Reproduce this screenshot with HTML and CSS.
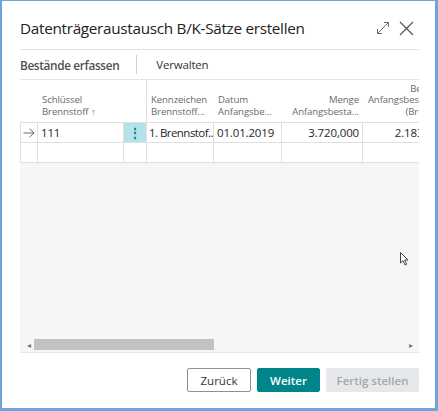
FILE: index.html
```html
<!DOCTYPE html>
<html lang="de">
<head>
<meta charset="utf-8">
<title>Datenträgeraustausch B/K-Sätze erstellen</title>
<link rel="stylesheet" href="styles.css">
</head>
<body>
<div class="frame">
  <div class="dialog">
    <header class="title-bar">
      <h1 class="title">Datenträgeraustausch B/K-Sätze erstellen</h1>
      <div class="title-icons">
        <svg class="icon" width="14" height="14" viewBox="0 0 14 14"><path d="M1.5 12.5 L12.5 1.5 M8 1.5 H12.5 V6 M1.5 8 V12.5 H6" fill="none" stroke="#6b6b6b" stroke-width="1"/></svg>
        <svg class="icon" width="15" height="15" viewBox="0 0 15 15"><path d="M1 1 L14 14 M14 1 L1 14" fill="none" stroke="#555" stroke-width="1.2"/></svg>
      </div>
    </header>
    <nav class="tabs">
      <span class="tab tab-active">Bestände erfassen</span>
      <span class="tab-sep"></span>
      <span class="tab">Verwalten</span>
    </nav>
    <div class="grid-wrap">
      <div class="grid">
        <div class="hcell"></div>
        <div class="hcell"><div>Schlüssel<br>Brennstoff <span class="sort">↑</span></div></div>
        <div class="hcell hcell-frozen"></div>
        <div class="hcell"><div>Kennzeichen<br>Brennstoff...</div></div>
        <div class="hcell"><div>Datum<br>Anfangsbe...</div></div>
        <div class="hcell right"><div>Menge<br>Anfangsbesta...</div></div>
        <div class="hcell right"><div>Betrag<br>Anfangsbestand<br>(Brutto)</div></div>

        <div class="cell arrow"><svg width="12" height="10" viewBox="0 0 12 10"><path d="M0.5 5 H11 M6.5 0.8 L11 5 L6.5 9.2" fill="none" stroke="#6a6a6a" stroke-width="1"/></svg></div>
        <div class="cell">111</div>
        <div class="cell dots">⋮</div>
        <div class="cell tight">1. Brennstof...</div>
        <div class="cell">01.01.2019</div>
        <div class="cell right">3.720,000</div>
        <div class="cell right">2.183,00</div>

        <div class="cell"></div>
        <div class="cell"></div>
        <div class="cell"></div>
        <div class="cell"></div>
        <div class="cell"></div>
        <div class="cell"></div>
        <div class="cell"></div>
      </div>
      <div class="grid-empty"></div>
      <div class="hscroll">
        <span class="sarrow">◂</span>
        <div class="track"><div class="thumb"></div></div>
        <span class="sarrow">▸</span>
      </div>
    </div>
    <footer class="actions">
      <button class="btn btn-secondary">Zurück</button>
      <button class="btn btn-primary">Weiter</button>
      <button class="btn btn-disabled">Fertig stellen</button>
    </footer>
    <svg class="cursor" width="10" height="14" viewBox="0 0 10 14"><path d="M0.5 0.5 V11 L3 8.6 L5 13 L6.6 12.3 L4.7 8 H8 Z" fill="#fff" stroke="#444" stroke-width="1"/></svg>
  </div>
</div>
</body>
</html>
```
FILE: styles.css
```css
* { box-sizing: border-box; }
html, body { margin: 0; padding: 0; }
body {
  width: 438px;
  height: 411px;
  font-family: "Open Sans", "Noto Sans", sans-serif;
  color: #212121;
  background: #fff;
}
.frame {
  width: 438px;
  height: 411px;
  border-style: solid;
  border-color: #6fa3dc;
  border-width: 1px 3px 3px 2px;
  background: #fff;
}
.dialog {
  position: relative;
  height: 100%;
  padding: 0 16px 0 18px;
  display: flex;
  flex-direction: column;
}
.title-bar {
  height: 49px;
  display: flex;
  align-items: center;
  justify-content: space-between;
  border-bottom: 1px solid #e3e3e3;
  padding-top: 6px;
}
.title {
  margin: 0;
  font-size: 15.3px;
  font-weight: 400;
  letter-spacing: -0.3px;
  color: #222;
}
.title-icons {
  display: flex;
  align-items: center;
  gap: 9px;
  margin-right: 5px;
}
.icon { display: block; }
.tabs {
  height: 30px;
  display: flex;
  align-items: center;
  border-bottom: 1px solid #e3e3e3;
}
.tab {
  font-size: 11.5px;
  color: #333;
  letter-spacing: -0.2px;
}
.tab-active {
  font-size: 11.8px;
  font-weight: 600;
  color: #505050;
  letter-spacing: -0.35px;
}
.tab-sep {
  width: 1px;
  height: 19px;
  background: #d0d0d0;
  margin: 0 19px 0 17px;
}
.grid-wrap {
  width: 399px;
  overflow: hidden;
  background: #f5f6f8;
  border-bottom: 1px solid #e6e6e6;
}
.grid {
  display: grid;
  grid-template-columns: 18px 86px 23px 67px 68px 81px 80px;
  grid-template-rows: 43px 20px 20px;
  width: 423px;
  background: #fff;
}
.hcell {
  font-size: 9.6px;
  line-height: 11.5px;
  color: #6a6a6a;
  padding: 0 4px 5px 4px;
  display: flex;
  flex-direction: column;
  justify-content: flex-end;
  white-space: nowrap;
  overflow: hidden;
  letter-spacing: -0.1px;
  border-bottom: 1px solid #e0e0e0;
}
.hcell.right { text-align: right; }
.hcell-frozen { border-right: 1px solid #e0e0e0; }
.sort { font-size: 9px; }
.cell {
  font-size: 11.5px;
  line-height: 19px;
  color: #262626;
  padding: 0 3px;
  white-space: nowrap;
  overflow: hidden;
  letter-spacing: -0.15px;
  border-right: 1px solid #e0e0e0;
  border-bottom: 1px solid #e0e0e0;
}
.cell.tight { letter-spacing: -0.55px; padding: 0 2px; }
.grid > .cell:nth-child(7n+1) { border-left: 1px solid #e0e0e0; }
.cell.right { text-align: right; padding-right: 3px; }
.arrow { padding: 0 2px; display: flex; align-items: center; }
.arrow svg { display: block; }
.dots {
  background: #b3e3e8;
  color: #0b7479;
  text-align: center;
  font-weight: 700;
  padding: 0;
}
.grid-empty { height: 174px; }
.hscroll {
  height: 15px;
  display: flex;
  align-items: center;
  padding: 0 3px 0 4px;
}
.sarrow {
  font-size: 8px;
  color: #777;
  width: 10px;
  text-align: center;
}
.track { flex: 1; height: 11px; }
.thumb {
  width: 180px;
  height: 11px;
  background: #c2c2c2;
}
.actions {
  display: flex;
  justify-content: flex-end;
  gap: 6px;
  padding-top: 15px;
}
.btn {
  height: 24px;
  font-family: "Open Sans", "Noto Sans", sans-serif;
  font-size: 11.5px;
  border-radius: 2px;
  padding: 0;
  cursor: default;
}
.btn-secondary {
  width: 64px;
  background: #fff;
  border: 1px solid #8f8f8f;
  color: #333;
}
.btn-primary {
  width: 63px;
  background: #00858a;
  border: 1px solid #00858a;
  color: #fff;
  font-weight: 600;
}
.btn-disabled {
  width: 93px;
  background: #e6e8eb;
  border: 1px solid #e6e8eb;
  color: #a4a7ab;
  font-weight: 600;
}
.cursor {
  position: absolute;
  left: 398px;
  top: 251px;
}
```
